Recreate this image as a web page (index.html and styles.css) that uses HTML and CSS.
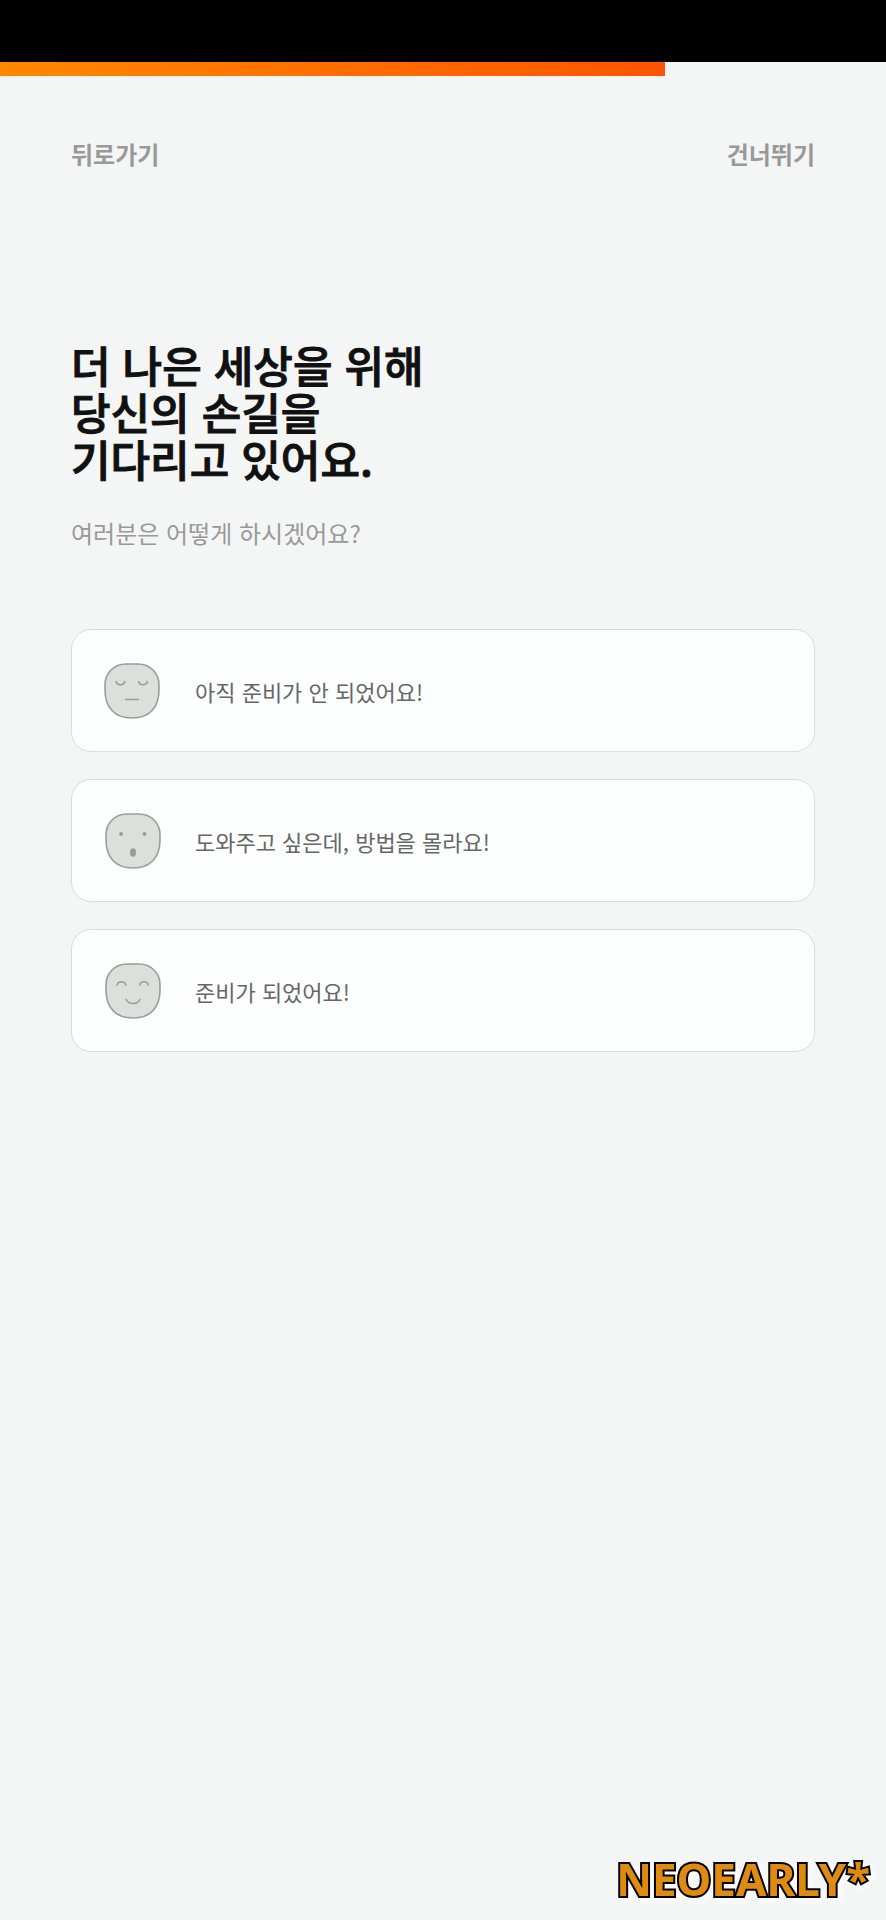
FILE: index.html
```html
<!DOCTYPE html>
<html lang="ko">
<head>
<meta charset="utf-8">
<meta name="viewport" content="width=device-width, initial-scale=1">
<title>NEOEARLY*</title>
<link rel="stylesheet" href="styles.css">
</head>
<body>
<div class="status-bar"></div>
<div class="progress"><div class="progress-fill"></div></div>
<nav class="nav">
  <button class="nav-button" type="button">뒤로가기</button>
  <button class="nav-button" type="button">건너뛰기</button>
</nav>
<main class="content">
  <h1 class="title">더 나은 세상을 위해<br>당신의 손길을<br>기다리고 있어요.</h1>
  <p class="subtitle">여러분은 어떻게 하시겠어요?</p>
  <div class="options">
    <button class="option" type="button">
      <svg class="face" viewBox="0 0 56 56" aria-hidden="true">
        <path class="face-shape" d="M22 1H34C46 1 55 10 55 22V27C55 45 45 55 28 55S1 45 1 27V22C1 10 10 1 22 1Z"/>
        <path class="face-line" d="M12 18C13 23 20 23 21 18M34.500 18C35.500 23 42.500 23 43.500 18M21 36.500H35"/>
      </svg>
      <span>아직 준비가 안 되었어요!</span>
    </button>
    <button class="option" type="button">
      <svg class="face" viewBox="-1 0 56 56" aria-hidden="true">
        <path class="face-shape" d="M22 1H34C46 1 55 10 55 22V27C55 45 45 55 28 55S1 45 1 27V22C1 10 10 1 22 1Z"/>
        <g class="face-dots"><circle cx="16" cy="21" r="1.900"/><circle cx="39.500" cy="21" r="1.900"/><ellipse cx="28" cy="39.500" rx="3" ry="4.200"/></g>
      </svg>
      <span>도와주고 싶은데, 방법을 몰라요!</span>
    </button>
    <button class="option" type="button">
      <svg class="face" viewBox="-1 0 56 56" aria-hidden="true">
        <path class="face-shape" d="M22 1H34C46 1 55 10 55 22V27C55 45 45 55 28 55S1 45 1 27V22C1 10 10 1 22 1Z"/>
        <path class="face-line" d="M12 22.500C13 17.500 20 17.500 21 22.500M34.500 22.500C35.500 17.500 42.500 17.500 43.500 22.500M21 36C23 42 33 42 35 36"/>
      </svg>
      <span>준비가 되었어요!</span>
    </button>
  </div>
</main>
<footer class="footer"><span class="brand">NEOEARLY*</span></footer>
</body>
</html>
```
FILE: styles.css
```css
* {
  box-sizing: border-box;
}

body {
  margin: 0;
  min-height: 100vh;
  display: flex;
  flex-direction: column;
  background: #f4f6f5;
  color: #111;
  font-family: "Noto Sans CJK KR", sans-serif;
}

button {
  font: inherit;
  cursor: pointer;
}

.status-bar {
  height: 62px;
  background: #000;
}

.progress-fill {
  width: 75%;
  height: 14px;
  background: linear-gradient(90deg, #ff8800, #ff5500);
}

.nav {
  display: flex;
  justify-content: space-between;
  padding: 58px 71px 0;
}

.nav-button {
  padding: 0;
  border: 0;
  background: none;
  color: #999;
  font-size: 24px;
  font-weight: 700;
  line-height: 40px;
}

.content {
  flex: 1;
  padding: 167px 71px 0;
}

.title {
  margin: 0;
  font-size: 43px;
  font-weight: 500;
  line-height: 47px;
  -webkit-text-stroke: 1px #111;
}

.subtitle {
  margin: 31px 0 0;
  color: #999;
  font-size: 24px;
  line-height: 40px;
}

.options {
  display: flex;
  flex-direction: column;
  gap: 27px;
  margin-top: 76px;
}

.option {
  display: flex;
  align-items: center;
  gap: 35px;
  width: 100%;
  padding: 33px 32px 32px;
  border: 1px solid #d9dcda;
  border-radius: 20px;
  background: #fdfefe;
  color: #666;
  font-size: 22px;
  line-height: 32px;
  text-align: left;
}

.face {
  flex: none;
  width: 56px;
  height: 56px;
  overflow: visible;
}

.face-shape {
  fill: #dddfdb;
  stroke: #999c9e;
  stroke-width: 1.6;
}

.face-line {
  fill: none;
  stroke: #999c9e;
  stroke-width: 1.5;
}

.face-dots {
  fill: #999c9e;
}

.footer {
  display: flex;
  justify-content: flex-end;
  padding: 0 16px 17px;
}

.brand {
  color: #df8b12;
  font-family: "Noto Sans", sans-serif;
  font-size: 44px;
  font-weight: 700;
  line-height: 48px;
  -webkit-text-stroke: 4px #000;
  paint-order: stroke fill;
  filter: drop-shadow(3px 3px 3px #fff);
}
```
